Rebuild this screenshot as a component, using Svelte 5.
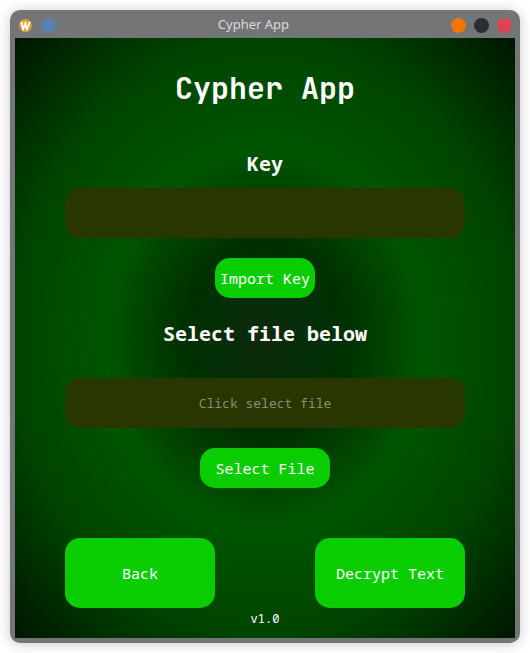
<script>
  let key = $state('');
  let file = $state('');
</script>

<main class="desktop">
  <section class="window">
    <header class="titlebar">
      <div class="group">
        <svg class="logo" width="13" height="13" viewBox="0 0 13 13">
          <circle cx="6.5" cy="6.5" r="6.4" fill="#e0a136" />
          <path d="M2.3 2.8L4.2 10L6.4 5.4L7.9 10L10.8 2.8M6.4 2.8V5.4" fill="none" stroke="#fff" stroke-width="1.9" />
        </svg>
        <i class="dot blue"></i>
      </div>
      <span class="caption">Cypher App</span>
      <div class="group right">
        <i class="dot orange"></i>
        <i class="dot dark"></i>
        <i class="dot red"></i>
      </div>
    </header>
    <div class="content">
      <h1>Cypher App</h1>
      <h2 class="key-label">Key</h2>
      <input bind:value={key} aria-label="Key" />
      <button class="import">Import Key</button>
      <h2 class="file-label">Select file below</h2>
      <input bind:value={file} placeholder="Click select file" readonly />
      <button class="select">Select File</button>
      <div class="actions">
        <button class="big">Back</button>
        <button class="big">Decrypt Text</button>
      </div>
      <footer>v1.0</footer>
    </div>
  </section>
</main>

<style>
  :global(body) { background: #fff; }
  .desktop {
    box-sizing: border-box;
    width: 530px;
    height: 653px;
    padding: 10px;
    overflow: hidden;
    background: #fff;
  }
  .window {
    box-sizing: border-box;
    width: 510px;
    height: 633px;
    padding: 0 5px 5px;
    border-radius: 10px;
    background: #737577;
    box-shadow: 0 1px 13px rgba(0, 0, 0, 0.22);
  }
  .titlebar {
    height: 28px;
    display: grid;
    grid-template-columns: 1fr auto 1fr;
    align-items: center;
    color: #dcdcdc;
    font: 13px/28px "Noto Sans", sans-serif;
  }
  .caption { padding-right: 23px; }
  .group { display: flex; align-items: center; gap: 9px; padding: 3px 0 0 4px; margin-right: -12px; }
  .group.right { justify-content: flex-end; gap: 8px; padding: 3px 3px 0 0; margin: 0; }
  .dot { width: 15px; height: 15px; border-radius: 50%; }
  .blue { background: #5c81ad; }
  .orange { background: #f67400; }
  .dark { background: #2a2e32; }
  .red { background: #da4453; }
  .content {
    width: 500px;
    height: 600px;
    display: flex;
    flex-direction: column;
    align-items: center;
    color: #fff;
    font-family: "Noto Sans Mono", "DejaVu Sans Mono", monospace;
    background: radial-gradient(ellipse 354px 424px at center,
      #10290b 0%, #072d0a 10%, #003000 23%, #005500 45%, #004400 70%, #001600 100%);
  }
  h1 {
    margin: 30px 0 0;
    font: bold 30px/40px "JetBrains Mono", "Noto Sans Mono", "DejaVu Sans Mono", monospace;
  }
  h2 { margin: 0; font-size: 20px; line-height: 30px; font-weight: bold; }
  .key-label { margin: 41px 0 9px; }
  .file-label { margin: 21px 0 29px; }
  input {
    box-sizing: border-box;
    width: 400px;
    height: 50px;
    flex: none;
    margin: 0;
    padding: 0 10px;
    border: 0;
    border-radius: 15px;
    background: #283702;
    color: #fff;
    font: 13px "Noto Sans Mono", "DejaVu Sans Mono", monospace;
    text-align: center;
    outline: none;
  }
  input::placeholder { color: #87926d; opacity: 1; }
  button {
    height: 40px;
    flex: none;
    margin: 20px 0 0;
    padding: 0;
    border: 0;
    border-radius: 15px;
    background: #09cd00;
    color: #fff;
    font: 15px "Noto Sans Mono", "DejaVu Sans Mono", monospace;
  }
  .import { width: 100px; }
  .select { width: 130px; }
  .actions { width: 400px; display: flex; justify-content: space-between; margin-top: 50px; }
  .big { width: 150px; height: 70px; margin: 0; }
  footer { font-size: 12px; line-height: 22px; }
</style>
